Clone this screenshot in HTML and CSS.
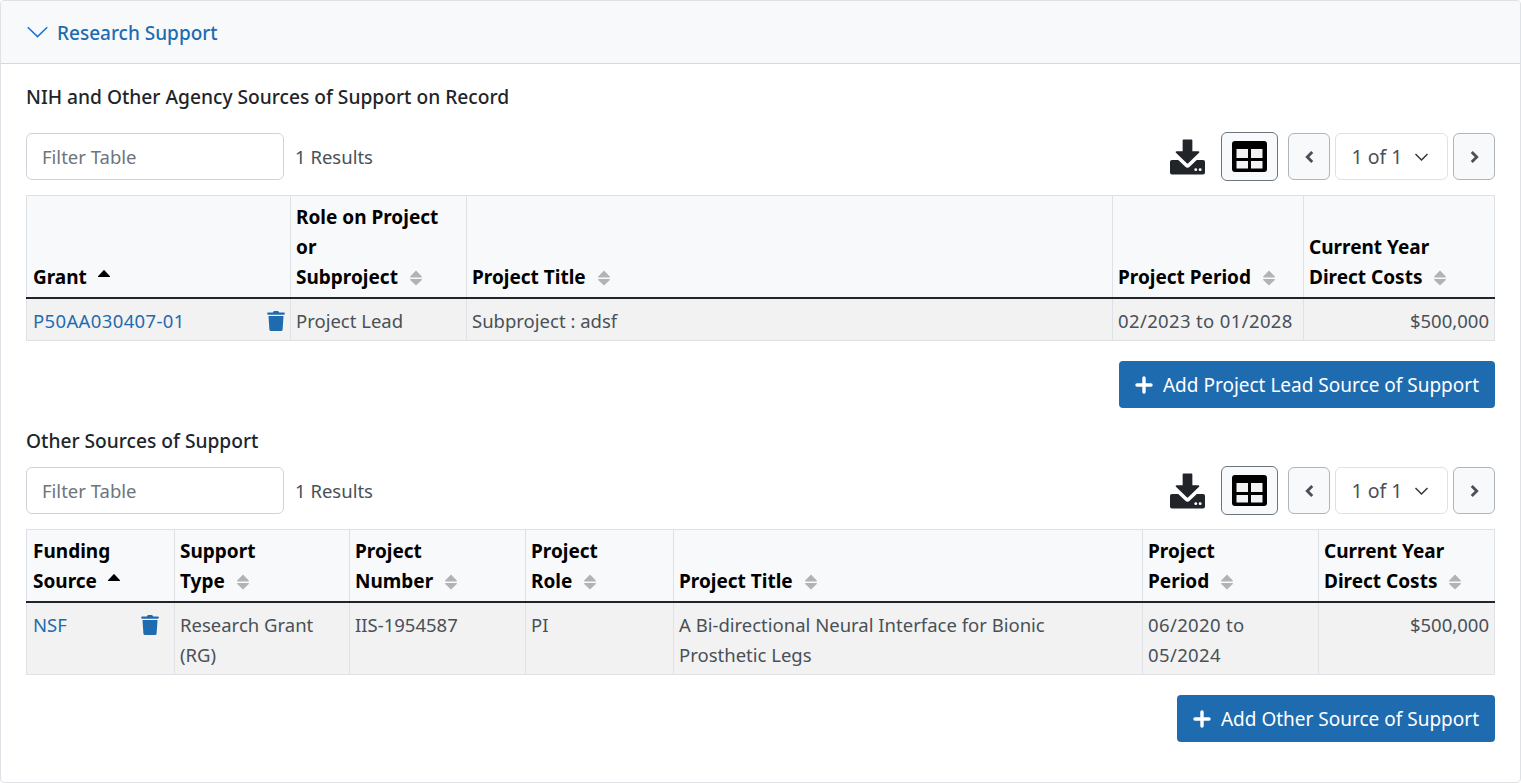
FILE: index.html
```html
<!DOCTYPE html>
<html lang="en">
<head>
<meta charset="utf-8">
<title>Research Support</title>
<link rel="stylesheet" href="styles.css">
</head>
<body>
<svg class="defs" width="0" height="0" aria-hidden="true">
  <symbol id="sort" viewBox="0 0 14 20"><path d="M1.2 8.4 7 2.6l5.8 5.8a.6.6 0 0 1-.4 1H1.6a.6.6 0 0 1-.4-1zM1.6 11h10.8a.6.6 0 0 1 .4 1L7 17.4 1.2 12a.6.6 0 0 1 .4-1z" fill="#b1b3b5"/></symbol>
  <symbol id="sortup" viewBox="0 0 14 8"><path d="M1 7.2 6.4 1.4a.8.8 0 0 1 1.2 0L13 7.2a.5.5 0 0 1-.4.8H1.4a.5.5 0 0 1-.4-.8z" fill="#000"/></symbol>
  <symbol id="trash" viewBox="0 0 18 20"><path d="M6.2.8A1.3 1.3 0 0 1 7.4 0h3.2a1.3 1.3 0 0 1 1.2.8l.4.7h4.6a1.1 1.1 0 0 1 0 2.2H1.2a1.1 1.1 0 0 1 0-2.2h4.6zM1.5 5h15l-.9 13.4A1.7 1.7 0 0 1 13.9 20H4.1a1.7 1.7 0 0 1-1.7-1.6z" fill="#1f6bb0"/></symbol>
  <symbol id="download" viewBox="0 0 36 36"><path d="M14 0h8a1 1 0 0 1 1 1v11h6.2a1 1 0 0 1 .7 1.7L18.7 24.5a1 1 0 0 1-1.4 0L6.100 13.700a1 1 0 0 1 .7-1.7H13V1a1 1 0 0 1 1-1zM2 21h6.500l7 6.800a3.500 3.500 0 0 0 5 0l7-6.800H34a2 2 0 0 1 2 2v11a2 2 0 0 1-2 2H2a2 2 0 0 1-2-2V23a2 2 0 0 1 2-2z" fill="#212529"/><circle cx="26.500" cy="31" r="1.500" fill="#fff"/><circle cx="31" cy="31" r="1.500" fill="#fff"/></symbol>
  <symbol id="grid" viewBox="0 0 35 31"><rect width="35" height="31" rx="3" fill="#000"/><rect x="4.500" y="8" width="11.500" height="9" fill="#f1f3f5"/><rect x="19" y="8" width="11.500" height="9" fill="#f1f3f5"/><rect x="4.500" y="20" width="11.500" height="7.500" fill="#f1f3f5"/><rect x="19" y="20" width="11.500" height="7.500" fill="#f1f3f5"/></symbol>
  <symbol id="left" viewBox="0 0 10 14"><path d="M7.500 2.500 3 7l4.500 4.500" fill="none" stroke="#495057" stroke-width="2.600" stroke-linejoin="miter"/></symbol>
  <symbol id="right" viewBox="0 0 10 14"><path d="M2.500 2.500 7 7l-4.500 4.500" fill="none" stroke="#495057" stroke-width="2.600" stroke-linejoin="miter"/></symbol>
  <symbol id="down" viewBox="0 0 14 8"><path d="M1 1l6 6 6-6" fill="none" stroke="#343a40" stroke-width="1.500"/></symbol>
  <symbol id="plus" viewBox="0 0 18 18"><path d="M9 2v14M2 9h14" fill="none" stroke="#fff" stroke-width="3.400" stroke-linecap="round"/></symbol>
</svg>

<section class="card">
  <header class="card-header">
    <svg class="caret" viewBox="0 0 22 12"><path d="M.8 1 11 10.800 21.200 1" fill="none" stroke="#1a73d9" stroke-width="1.600"/></svg>
    <span>Research Support</span>
  </header>
  <div class="card-body">
    <h2 class="title">NIH and Other Agency Sources of Support on Record</h2>
    <div class="toolbar">
      <input class="filter" type="text" placeholder="Filter Table">
      <span class="results">1 Results</span>
      <div class="tools">
        <svg class="ico-download"><use href="#download"/></svg>
        <button class="grid-btn"><svg class="ico-grid"><use href="#grid"/></svg></button>
        <button class="page-btn"><svg class="ico-arrow"><use href="#left"/></svg></button>
        <button class="page-select">1 of 1<svg class="ico-down"><use href="#down"/></svg></button>
        <button class="page-btn"><svg class="ico-arrow"><use href="#right"/></svg></button>
      </div>
    </div>
    <table class="data first">
      <thead>
        <tr>
          <th>Grant<svg class="ico-sortup"><use href="#sortup"/></svg></th>
          <th>Role on Project<br>or<br>Subproject<svg class="ico-sort"><use href="#sort"/></svg></th>
          <th>Project Title<svg class="ico-sort"><use href="#sort"/></svg></th>
          <th>Project Period<svg class="ico-sort"><use href="#sort"/></svg></th>
          <th>Current Year<br>Direct Costs<svg class="ico-sort"><use href="#sort"/></svg></th>
        </tr>
      </thead>
      <tbody>
        <tr>
          <td><div class="cell-link"><a class="digits" href="#">P50AA030407-01</a><svg class="ico-trash"><use href="#trash"/></svg></div></td>
          <td>Project Lead</td>
          <td>Subproject : adsf</td>
          <td class="digits">02/2023 to 01/2028</td>
          <td class="num">$500,000</td>
        </tr>
      </tbody>
    </table>
    <div class="actions"><button class="add"><svg class="ico-plus"><use href="#plus"/></svg>Add Project Lead Source of Support</button></div>

    <h2 class="title second-title">Other Sources of Support</h2>
    <div class="toolbar">
      <input class="filter" type="text" placeholder="Filter Table">
      <span class="results">1 Results</span>
      <div class="tools">
        <svg class="ico-download"><use href="#download"/></svg>
        <button class="grid-btn"><svg class="ico-grid"><use href="#grid"/></svg></button>
        <button class="page-btn"><svg class="ico-arrow"><use href="#left"/></svg></button>
        <button class="page-select">1 of 1<svg class="ico-down"><use href="#down"/></svg></button>
        <button class="page-btn"><svg class="ico-arrow"><use href="#right"/></svg></button>
      </div>
    </div>
    <table class="data second">
      <thead>
        <tr>
          <th>Funding<br>Source<svg class="ico-sortup"><use href="#sortup"/></svg></th>
          <th>Support<br>Type<svg class="ico-sort"><use href="#sort"/></svg></th>
          <th>Project<br>Number<svg class="ico-sort"><use href="#sort"/></svg></th>
          <th>Project<br>Role<svg class="ico-sort"><use href="#sort"/></svg></th>
          <th>Project Title<svg class="ico-sort"><use href="#sort"/></svg></th>
          <th>Project<br>Period<svg class="ico-sort"><use href="#sort"/></svg></th>
          <th>Current Year<br>Direct Costs<svg class="ico-sort"><use href="#sort"/></svg></th>
        </tr>
      </thead>
      <tbody>
        <tr>
          <td><div class="cell-link narrow"><a href="#">NSF</a><svg class="ico-trash"><use href="#trash"/></svg></div></td>
          <td>Research Grant<br>(RG)</td>
          <td>IIS-1954587</td>
          <td>PI</td>
          <td>A Bi-directional Neural Interface for Bionic<br>Prosthetic Legs</td>
          <td class="digits">06/2020 to<br>05/2024</td>
          <td class="num">$500,000</td>
        </tr>
      </tbody>
    </table>
    <div class="actions"><button class="add"><svg class="ico-plus"><use href="#plus"/></svg>Add Other Source of Support</button></div>
  </div>
</section>
</body>
</html>
```
FILE: styles.css
```css
* { box-sizing: border-box; }
html, body { margin: 0; padding: 0; }
body {
  font-family: "Noto Sans", "Open Sans", sans-serif;
  font-size: 18.5px;
  line-height: 30px;
  color: #212529;
  background: #fff;
  overflow: hidden;
}
.defs { position: absolute; }
.card {
  height: 783px;
  border: 1px solid #dee2e6;
  border-radius: 4px;
  overflow: hidden;
}
.card-header {
  height: 63px;
  background: #f8f9fa;
  border-bottom: 1px solid #d5d9de;
  display: flex;
  align-items: center;
  padding: 2px 0 0 26px;
  color: #1f6bb0;
  font-size: 19px;
  font-weight: 500;
}
.caret { width: 21px; height: 12px; margin-right: 9px; margin-top: -2px; }
.card-body { padding: 18px 25px 0 25px; }
.title {
  margin: 0 0 21px;
  font-size: 19.2px;
  font-weight: 500;
  line-height: 30px;
  color: #212529;
}
.second-title { margin-top: 18px; margin-bottom: 11px; }
.toolbar { display: flex; align-items: center; height: 47px; margin-bottom: 15px; }
.filter {
  width: 258px;
  height: 47px;
  border: 1px solid #ced4da;
  border-radius: 6px;
  padding: 0 15px;
  font: inherit;
  color: #212529;
}
.filter::placeholder { color: #6c757d; opacity: 1; }
.results { margin-left: 11px; color: #495057; }
.tools { margin-left: auto; display: flex; align-items: center; }
.ico-download { width: 35px; height: 36px; margin-right: 16px; }
.grid-btn {
  width: 57px; height: 49px;
  border: 1px solid #6c757d;
  border-radius: 6px;
  background: #f8f9fa;
  padding: 0;
  display: flex; align-items: center; justify-content: center;
  margin-right: 10px;
}
.ico-grid { width: 35px; height: 31px; }
.page-btn {
  width: 42px; height: 47px;
  border: 1px solid #adb5bd;
  border-radius: 6px;
  background: #f8f9fa;
  padding: 0;
  display: flex; align-items: center; justify-content: center;
}
.ico-arrow { width: 11px; height: 16px; }
.page-select {
  width: 113px; height: 47px;
  margin: 0 5px;
  border: 1px solid #dee2e6;
  border-radius: 6px;
  background: #fff;
  font: inherit;
  font-size: 19.5px;
  color: #495057;
  padding: 0 2px 0 0;
  display: flex; align-items: center; justify-content: center;
}
.ico-down { width: 15px; height: 8px; margin-left: 12px; }
.data {
  width: 1469px;
  table-layout: fixed;
  border-collapse: collapse;
}
.data th, .data td {
  border: 1px solid #dee2e6;
  text-align: left;
}
.data th {
  padding: 6px 5px 5px;
  vertical-align: bottom;
  background: #f8f9fa;
  color: #000;
  font-weight: 700;
  font-size: 19px;
  border-bottom: 2px solid #212529;
}
.data td {
  padding: 7px 5px 4px;
  vertical-align: top;
  background: #f2f2f2;
  color: #495057;
}
.data td.num { text-align: right; }
.data .digits { letter-spacing: .36px; }
.data th:first-child, .data td:first-child { padding-left: 6px; }
.first th:nth-child(1) { width: 264px; }
.first th:nth-child(2) { width: 176px; }
.first th:nth-child(3) { width: 646px; }
.first th:nth-child(4) { width: 191px; }
.second th:nth-child(1) { width: 148px; }
.second th:nth-child(2) { width: 175px; }
.second th:nth-child(3) { width: 176px; }
.second th:nth-child(4) { width: 148px; }
.second th:nth-child(5) { width: 469px; }
.second th:nth-child(6) { width: 176px; }
.cell-link { display: flex; justify-content: space-between; align-items: center; }
.cell-link.narrow { padding-right: 10px; }
.cell-link a { color: #1f6bb0; text-decoration: none; }
.ico-trash { width: 18px; height: 20px; }
.ico-sort { width: 14px; height: 20px; margin-left: 11px; vertical-align: -4px; }
.ico-sortup { width: 14px; height: 8px; margin-left: 10px; vertical-align: 7px; }
.actions { display: flex; justify-content: flex-end; margin-top: 20px; }
.add {
  height: 47px;
  border: 0;
  border-radius: 4px;
  background: #1f6bb0;
  color: #fff;
  font: inherit;
  font-size: 19px;
  padding: 0 16px;
  display: flex; align-items: center;
}
.ico-plus { width: 18px; height: 18px; margin-right: 10px; }
```
